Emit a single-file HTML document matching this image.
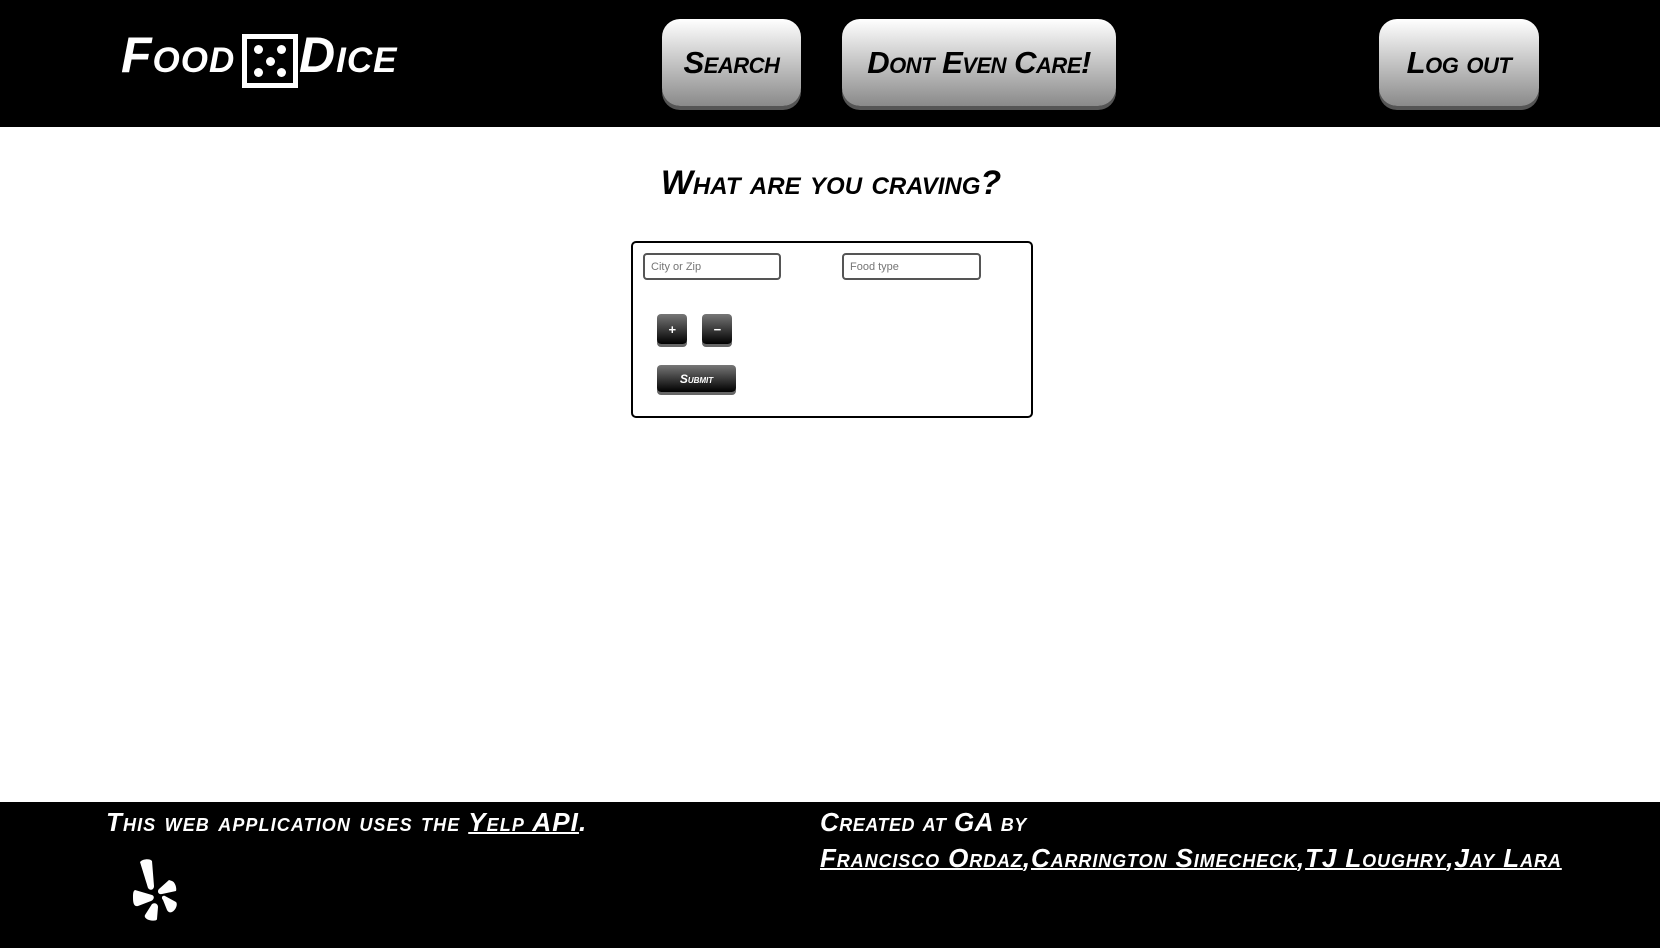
<!DOCTYPE html>
<html><head><meta charset="utf-8"><style>
*{margin:0;padding:0;box-sizing:border-box}
body{width:1660px;height:948px;position:relative;background:#fff;font-family:"Liberation Sans",sans-serif;overflow:hidden}
.m{font-family:"Liberation Sans",sans-serif;font-weight:bold;font-style:italic;font-variant:small-caps;white-space:nowrap;position:absolute}
header{position:absolute;left:0;top:0;width:1660px;height:127px;background:#000}
.btn{position:absolute;top:19px;height:87px;border-radius:18px;background:linear-gradient(#fff,#8a8a8a);box-shadow:0 4px 0 #555;display:flex;align-items:center;justify-content:center;color:#000;font-size:31px;font-weight:bold;font-style:italic;font-variant:small-caps;letter-spacing:-0.5px}
footer{position:absolute;left:0;top:802px;width:1660px;height:146px;background:#000;color:#fff}
footer u{text-decoration:underline;text-decoration-thickness:2px}
input{position:absolute;height:27px;border:2px solid #555;border-radius:4px;font-size:11px;padding-left:6px;color:#666;font-family:"Liberation Sans",sans-serif}
.sb{position:absolute;border-radius:4px;background:linear-gradient(#777,#000);box-shadow:0 3px 0 #666;color:#fff;font-weight:bold;font-style:italic;display:flex;align-items:center;justify-content:center}
</style></head><body>
<header>
<div class="m" style="left:121px;top:26px;font-size:50px;color:#fff;letter-spacing:1px">Food</div>
<div style="position:absolute;left:242px;top:34px;width:56px;height:54px;border:5px solid #fff;background:#000">
<span style="position:absolute;left:7px;top:6px;width:9px;height:9px;border-radius:50%;background:#fff"></span>
<span style="position:absolute;right:7px;top:6px;width:9px;height:9px;border-radius:50%;background:#fff"></span>
<span style="position:absolute;left:19px;top:18px;width:9px;height:9px;border-radius:50%;background:#fff"></span>
<span style="position:absolute;left:7px;bottom:6px;width:9px;height:9px;border-radius:50%;background:#fff"></span>
<span style="position:absolute;right:7px;bottom:6px;width:9px;height:9px;border-radius:50%;background:#fff"></span>
</div>
<div class="m" style="left:299px;top:26px;font-size:50px;color:#fff;letter-spacing:1px">Dice</div>
<div class="btn" style="left:662px;width:139px">Search</div>
<div class="btn" style="left:842px;width:274px">Dont Even Care!</div>
<div class="btn" style="left:1379px;width:160px">Log out</div>
</header>
<div class="m" style="left:0;width:1662px;text-align:center;top:164px;font-size:34px;color:#000">What are you craving?</div>
<div style="position:absolute;left:631px;top:241px;width:402px;height:177px;border:2px solid #000;border-radius:5px"></div>
<input style="left:643px;top:253px;width:138px" placeholder="City or Zip">
<input style="left:842px;top:253px;width:139px" placeholder="Food type">
<div class="sb" style="left:657px;top:314px;width:30px;height:30px;font-size:13px">+</div>
<div class="sb" style="left:702px;top:314px;width:30px;height:30px;font-size:13px">−</div>
<div class="sb" style="left:657px;top:365px;width:79px;height:27px;font-size:12px;font-variant:small-caps">Submit</div>
<footer>
<div class="m" style="left:106px;top:5px;font-size:26px;letter-spacing:1.1px">This web application uses the <u>Yelp API</u>.</div>
<div class="m" style="left:820px;top:5px;font-size:26px;letter-spacing:0.5px">Created at GA by</div>
<div class="m" style="left:820px;top:41px;font-size:26px;letter-spacing:0.9px"><u>Francisco Ordaz</u>,<u>Carrington Simecheck</u>,<u>TJ Loughry</u>,<u>Jay Lara</u></div>
<svg style="position:absolute;left:132px;top:56px" width="52" height="64" viewBox="0 0 52 64" fill="#fff">
<path d="M8 4 C10 1 18 0 20 3 L22 28 C22 32 18 33 16 30 Z"/>
<path d="M3 32 L20 37 C23 38 22 42 19 43 L6 48 C2 49 1 45 1 40 C1 36 1 33 3 32Z"/>
<path d="M40 23 C43 24 45 30 44 33 L30 36 C26 37 25 33 27 31 L37 22Z"/>
<path d="M20 46 C23 44 26 46 26 49 L25 61 C25 63 20 63 17 62 C14 61 12 59 13 57Z"/>
<path d="M31 42 C29 40 30 37 33 38 L44 44 C46 46 44 52 40 54 C38 55 36 54 35 52Z"/>
</svg>
</footer>
</body></html>
